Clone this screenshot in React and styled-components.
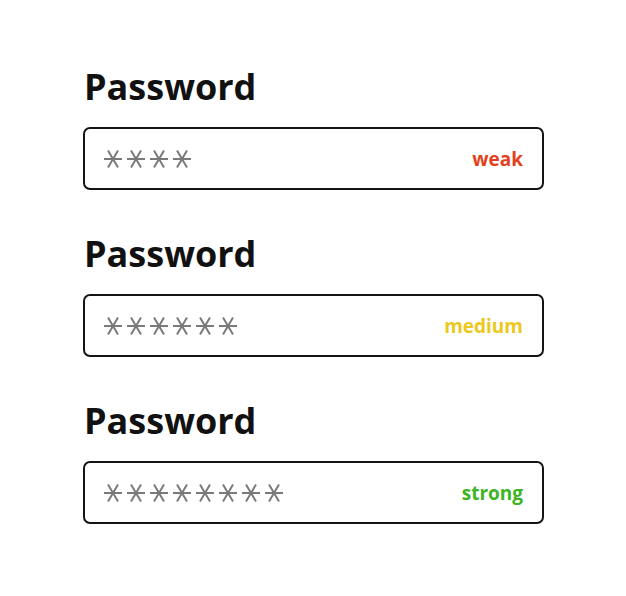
import React from "react";
import styled, { createGlobalStyle } from "styled-components";

const Global = createGlobalStyle`
  html, body { margin: 0; padding: 0; background: #ffffff; }
  body { font-family: "Open Sans", "Noto Sans", sans-serif; }
`;

const Page = styled.div`
  width: 626px;
  height: 596px;
  box-sizing: border-box;
  padding: 65px 0 0 83px;
  display: flex;
  flex-direction: column;
  gap: 42px;
`;

const Field = styled.section`
  display: flex;
  flex-direction: column;
  gap: 18px;
`;

const Title = styled.h2`
  margin: 0 0 0 1px;
  font-size: 36px;
  line-height: 44px;
  font-weight: 700;
  color: #111111;
  letter-spacing: 0;
`;

const Box = styled.div`
  width: 461px;
  height: 63px;
  box-sizing: border-box;
  border: 2px solid #141414;
  border-radius: 7px;
  display: flex;
  align-items: center;
  justify-content: space-between;
  padding: 0 19px 0 18px;
`;

const Dots = styled.div`
  display: flex;
  gap: 3px;
`;

const Strength = styled.span`
  font-size: 19px;
  font-weight: 700;
  color: ${(p) => p.$color};
`;

function Star() {
  return (
    <svg width="20" height="20" viewBox="0 0 20 20">
      <g stroke="#7a7a7a" strokeWidth="2" strokeLinecap="butt">
        <line x1="1" y1="10" x2="19" y2="10" />
        <line x1="5" y1="1.5" x2="15" y2="18.5" />
        <line x1="15" y1="1.5" x2="5" y2="18.5" />
      </g>
    </svg>
  );
}

const fields = [
  { count: 4, label: "weak", color: "#e3411d" },
  { count: 6, label: "medium", color: "#ebc81a" },
  { count: 8, label: "strong", color: "#3cb424" },
];

export default function App() {
  return (
    <>
      <Global />
      <Page>
        {fields.map((f) => (
          <Field key={f.label}>
            <Title>Password</Title>
            <Box>
              <Dots>
                {Array.from({ length: f.count }, (_, i) => (
                  <Star key={i} />
                ))}
              </Dots>
              <Strength $color={f.color}>{f.label}</Strength>
            </Box>
          </Field>
        ))}
      </Page>
    </>
  );
}
